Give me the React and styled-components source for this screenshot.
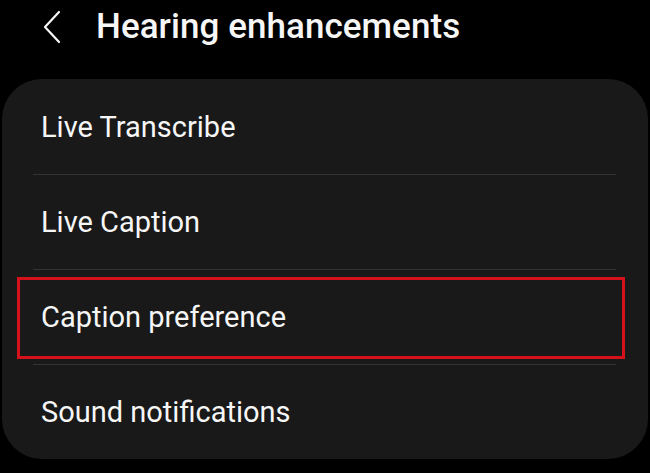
import * as React from 'react';
import styled, { createGlobalStyle } from 'styled-components';

const Global = createGlobalStyle`
  html, body {
    margin: 0;
    padding: 0;
    background: #000;
  }
  body {
    font-family: Roboto, "Noto Sans", "Liberation Sans", sans-serif;
    color: #f6f6f6;
  }
`

const Page = styled.div`
  width: 650px;
  height: 473px;
  background: #000;
  overflow: hidden;
`

const Header = styled.div`
  display: flex;
  align-items: center;
  height: 53px;
  padding-left: 41px;
  gap: 32px;
`

const BackButton = styled.div`
  display: flex;
  align-items: center;
  width: 23px;
  height: 34px;
`

const Title = styled.h1`
  margin: 0;
  font-size: 35px;
  font-weight: 500;
  letter-spacing: 0.05px;
  color: #f6f6f6;
`

const Card = styled.div`
  margin: 26px 2px 0 2px;
  background: #191919;
  border-radius: 40px;
`

const Divider = styled.div`
  height: 1px;
  margin: 0 32px 0 31px;
  background: #333333;
`

const Row = styled.div`
  position: relative;
  display: flex;
  align-items: center;
  height: ${p => p.$first ? 95 : 94}px;
  padding-left: 39px;
  font-size: 29px;
  color: #f6f6f6;
`

const Highlight = styled.div`
  position: absolute;
  left: 15px;
  right: 23px;
  top: 7px;
  bottom: 5px;
  border: 3px solid #d5121c;
  pointer-events: none;
`

const items = ['Live Transcribe', 'Live Caption', 'Caption preference', 'Sound notifications']

export default function App() {
  return (
    <Page>
      <Global />
      <Header>
        <BackButton>
          <svg width="23" height="34" viewBox="0 0 23 34" fill="none">
            <path d="M18 2 L4 17 L18 32" stroke="#f6f6f6" strokeWidth="2.2" strokeLinecap="round" strokeLinejoin="round" />
          </svg>
        </BackButton>
        <Title>Hearing enhancements</Title>
      </Header>
      <Card>
        {items.map((label, i) => (
          <React.Fragment key={label}>
            {i > 0 && <Divider />}
            <Row $first={i === 0}>
              {label}
              {label === 'Caption preference' && <Highlight />}
            </Row>
          </React.Fragment>
        ))}
      </Card>
    </Page>
  );
}
